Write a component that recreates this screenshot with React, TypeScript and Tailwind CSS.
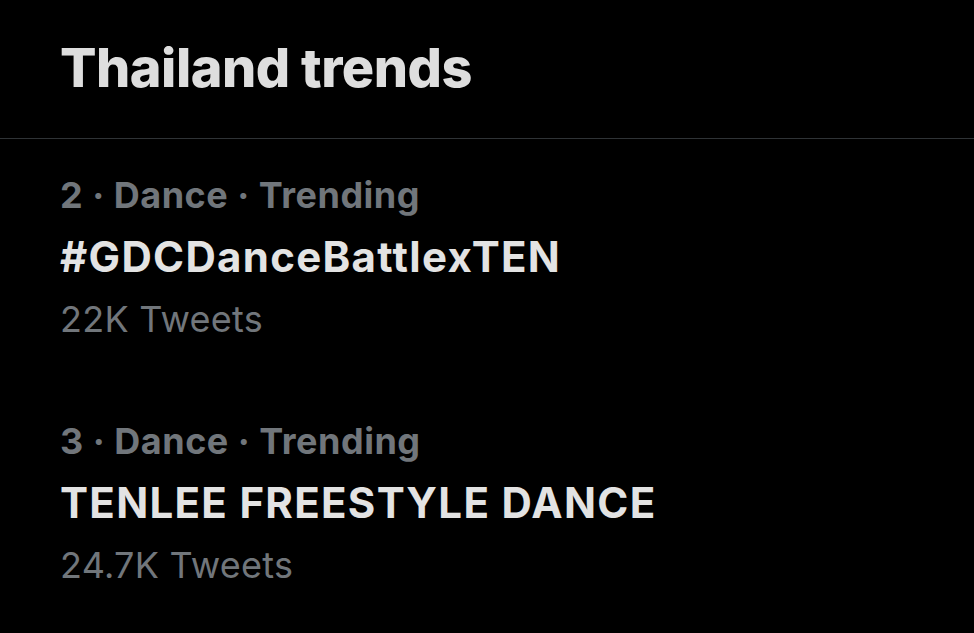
import React from "react";

const trends = [
  { rank: 2, category: "Dance", name: "#GDCDanceBattlexTEN", count: "22K Tweets" },
  { rank: 3, category: "Dance", name: "TENLEE FREESTYLE DANCE", count: "24.7K Tweets" },
];

export default function App() {
  return (
    <div className="w-[974px] h-[633px] bg-black overflow-hidden font-['Inter',sans-serif]">
      <div className="h-[139px] border-b border-[#2f3336] pl-[60px] pt-[36px]">
        <h1 className="text-[54px] leading-[64px] font-extrabold text-[#dedede] tracking-[-0.5px]">Thailand trends</h1>
      </div>
      <div className="flex flex-col gap-[60px] pl-[60px] pt-[25px]">
        {trends.map((t) => (
          <div key={t.rank} className="flex flex-col">
            <div className="text-[36px] leading-[62px] font-bold text-[#71767b] tracking-[0.5px]">
              {t.rank} · {t.category} · Trending
            </div>
            <div className="text-[42px] leading-[62px] font-bold text-[#e3e3e3] tracking-[1.3px]">{t.name}</div>
            <div className="text-[36px] leading-[62px] text-[#71767b] tracking-[0.25px]">{t.count}</div>
          </div>
        ))}
      </div>
    </div>
  );
}
